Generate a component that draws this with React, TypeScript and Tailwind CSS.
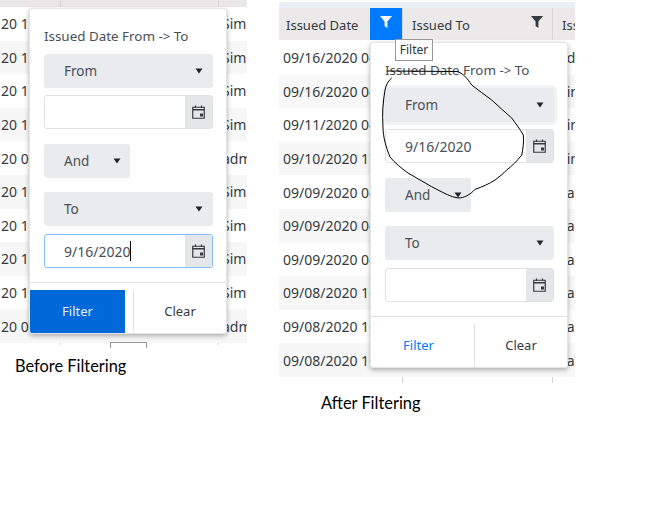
const font = "[font-family:'Noto_Sans','Open_Sans',sans-serif]";

function Caret() {
  return (
    <svg width="8" height="6" viewBox="0 0 8 6" className="shrink-0">
      <path d="M0.5 0.5h7L4 5.5z" fill="#212529" />
    </svg>
  );
}

function Calendar() {
  return (
    <svg width="13" height="14" viewBox="0 0 13 14" fill="none" className="shrink-0">
      <path d="M0.75 2.25h11.5v11H0.75z" stroke="#343a40" strokeWidth="1.2" />
      <path d="M0.75 4.75h11.5" stroke="#343a40" strokeWidth="1.6" />
      <path d="M3.5 0.5v2.5M9.5 0.5v2.5" stroke="#343a40" strokeWidth="1.2" />
      <path d="M8 8.5h3v3H8z" fill="#343a40" />
    </svg>
  );
}

function Funnel({ color }: { color: string }) {
  return (
    <svg width="12" height="12" viewBox="0 0 12 12">
      <path d="M0 0h12L7.4 5.6V12L4.6 10V5.6z" fill={color} />
    </svg>
  );
}

function Select({ label, wide = true, halo = false }: { label: string; wide?: boolean; halo?: boolean }) {
  return (
    <div
      className={`h-[34px] rounded-[3px] bg-[#e9ebee] flex items-center justify-between pl-[20px] text-[13.5px] text-[#495057] ${
        wide ? "w-[169px] pr-[10px]" : "w-[86px] pr-[9px]"
      } ${halo ? "ring-[3px] ring-[#f1f2f4]" : ""}`}
    >
      <span>{label}</span>
      <Caret />
    </div>
  );
}

function DateInput({ value, focused = false }: { value?: string; focused?: boolean }) {
  return (
    <div
      className={`h-[34px] w-[169px] rounded-[3px] border flex overflow-hidden bg-white ${
        focused ? "border-[#80bdff]" : "border-[#dfe1e4]"
      }`}
    >
      <div className="flex-1 flex items-center pl-[19px] text-[14px] text-[#495057]">
        {value}
        {focused && <span className="w-px h-[20px] bg-black" />}
      </div>
      <div className="w-[27px] bg-[#e4e6e9] flex items-center justify-center">
        <Calendar />
      </div>
    </div>
  );
}

function Popup({
  className,
  fromValue,
  toValue,
  solid,
  halo,
}: {
  className: string;
  fromValue?: string;
  toValue?: string;
  solid?: boolean;
  halo?: boolean;
}) {
  return (
    <div
      className={`absolute w-[198px] h-[326px] bg-white rounded-[3px] border border-[#e4e4e4] shadow-[0_2px_5px_rgba(0,0,0,0.3)] flex flex-col overflow-hidden ${className}`}
    >
      <div className="px-[14px] pt-[17px] flex flex-col">
        <div className="h-[20px] leading-[20px] text-[13.4px] text-[#495057] whitespace-nowrap">Issued Date From -&gt; To</div>
        <div className="mt-[8px]">
          <Select label="From" halo={halo} />
        </div>
        <div className="mt-[7px]">
          <DateInput value={fromValue} />
        </div>
        <div className="mt-[15px]">
          <Select label="And" wide={false} />
        </div>
        <div className="mt-[14px]">
          <Select label="To" />
        </div>
        <div className="mt-[8px]">
          <DateInput value={toValue} focused={!!toValue} />
        </div>
      </div>
      <div className="mt-[14px] border-t border-[#e2e2e2] pt-[7px] flex-1 flex text-[13px]">
        <div
          className={`w-[95px] flex items-center justify-center ${
            solid ? "bg-[#0069d9] text-[#e6f0fb]" : "text-[#007bff]"
          }`}
        >
          Filter
        </div>
        <div className="w-[8px]" />
        <div className="flex-1 border-l border-[#e2e2e2] flex items-center justify-center text-[#343a40]">Clear</div>
      </div>
    </div>
  );
}

const leftRows = ["Sim", "Sim", "Sim", "Sim", "adm", "Sim", "Sim", "Sim", "Sim", "adm"];
const leftDates = ["20 1", "20 1", "20 1", "20 1", "20 0", "20 1", "20 1", "20 1", "20 1", "20 0"];

const rightRows = [
  ["09/16/2020 04:12", "adm"],
  ["09/16/2020 04:10", "Sim"],
  ["09/11/2020 04:02", "Sim"],
  ["09/10/2020 17:21", "Sim"],
  ["09/09/2020 04:44", "Saa"],
  ["09/09/2020 04:42", "Saa"],
  ["09/09/2020 04:40", "Saa"],
  ["09/08/2020 16:11", "Saa"],
  ["09/08/2020 16:10", "Saa"],
  ["09/08/2020 16:09", "Saa"],
];

export default function App() {
  return (
    <div className={`${font} w-[657px] h-[521px] bg-white flex overflow-hidden text-[#343a40]`}>
      {/* Before filtering */}
      <div className="w-[247px] shrink-0 relative">
        <div className="h-[7px] bg-[#e9e7e7] grid grid-cols-[61px_158px_28px]">
          <div className="border-r border-[#d5d5d5]" />
          <div className="border-r border-[#d5d5d5]" />
        </div>
        {leftRows.map((who, i) => (
          <div
            key={i}
            className={`h-[33.6px] grid grid-cols-[61px_158px_28px] items-center text-[14px] ${
              i % 2 ? "bg-[#f7f7f7]" : "bg-white"
            }`}
          >
            <div className="pl-[1px] whitespace-nowrap">{leftDates[i]}</div>
            <div />
            <div className="whitespace-nowrap overflow-hidden pl-[8px] -ml-[5px] w-[33px]">{who}</div>
          </div>
        ))}
        <div className="h-[2px] grid grid-cols-[61px_158px_28px]">
          <div className="border-r border-[#d5d5d5]" />
          <div className="border-r border-[#d5d5d5]" />
        </div>
        <div className="w-[37px] h-[6px] ml-[110px] -mt-[3px] border border-b-0 border-[#999]" />
        <div className="mt-[8px] ml-[15px] text-[16.4px] leading-[20px] text-black [font-family:'Lato',sans-serif]">Before Filtering</div>
        <Popup className="left-[29px] top-[8px]" toValue="9/16/2020" solid />
      </div>

      {/* After filtering */}
      <div className="w-[296px] shrink-0 ml-[32px] mt-[2px] relative">
        <div className="h-[6px] bg-[#e9f0f8]" />
        <div className="h-[32px] bg-[#ebe9e9] grid grid-cols-[124px_150px_22px] items-center text-[13px]">
          <div className="h-full flex items-center justify-between pl-[7px] border-r border-[#d5d5d5]">
            <span className="whitespace-nowrap pt-[4px]">Issued Date</span>
            <div className="w-[32px] h-full bg-[#007bff] flex items-center justify-center pb-[4px]">
              <Funnel color="#ffffff" />
            </div>
          </div>
          <div className="h-full flex items-center justify-between pl-[9px] pr-[9px] border-r border-[#d5d5d5]">
            <span className="whitespace-nowrap pt-[4px]">Issued To</span>
            <div className="pb-[4px]">
              <Funnel color="#343a40" />
            </div>
          </div>
          <div className="pl-[9px] pt-[4px] overflow-hidden whitespace-nowrap">Iss</div>
        </div>
        <div className="h-px" />
        {rightRows.map(([date, who], i) => (
          <div
            key={i}
            className={`h-[33.6px] grid grid-cols-[124px_150px_22px] items-center text-[14px] ${
              i % 2 ? "bg-[#f7f7f7]" : "bg-white"
            }`}
          >
            <div className="pl-[4px] whitespace-nowrap">{date}</div>
            <div />
            <div className="pl-[6px] overflow-hidden whitespace-nowrap">{who}</div>
          </div>
        ))}
        <div className="h-[6px] grid grid-cols-[124px_150px_22px]">
          <div className="border-r border-[#d5d5d5]" />
          <div className="border-r border-[#d5d5d5]" />
        </div>
        <div className="mt-[10px] ml-[42px] text-[16.4px] leading-[20px] text-black [font-family:'Lato',sans-serif]">After Filtering</div>

        <Popup className="left-[91px] top-[40px]" fromValue="9/16/2020" halo />

        {/* Tooltip */}
        <div className="absolute left-[116px] top-[37px] w-[38px] h-[22px] bg-white border border-[#999] text-[12px] flex items-center justify-center text-[#333]">
          Filter
        </div>
      </div>

      {/* Hand-drawn annotation */}
      <svg className="absolute left-0 top-0 pointer-events-none" width="657" height="521" fill="none">
        <path
          d="M386.7 71 L456.7 71.5 C463 73 467 78 471.7 85 C478 90 485 95 491.7 100 C498 106 505 112 511.7 118 C516 124 520 129 523.3 135 C524 142 523 149 521.7 155 C517 161 512 166 506.7 170 C503 174 499 177 495 180 C489 184 482 187 475 189.3 C470 195 464 198 458 198 C451 197 444 193 438 190 L431.7 186.7 C424 182 416 178 408 173 C401 168 395 163 390 157 C386 147 383 137 383 127 C382 114 383 102 385 90 C386 85 388 81 391.7 78"
          stroke="#000"
          strokeWidth="1"
        />
      </svg>
    </div>
  );
}
